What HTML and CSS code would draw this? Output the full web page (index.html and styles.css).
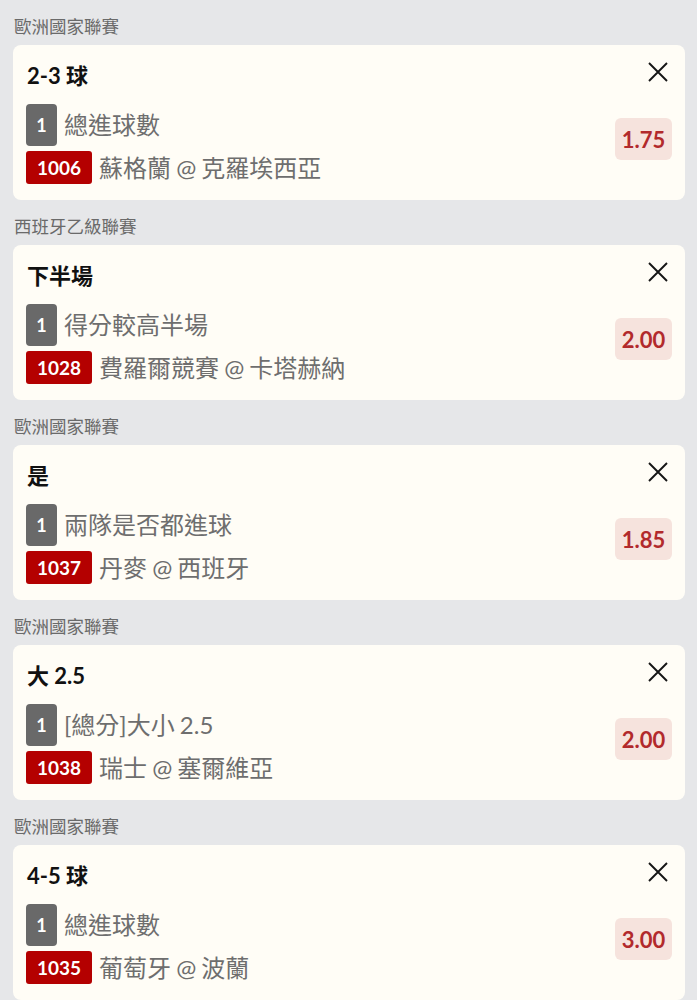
FILE: index.html
```html
<!DOCTYPE html>
<html lang="zh-Hant">
<head>
<meta charset="utf-8">
<link rel="stylesheet" href="styles.css">
</head>
<body>
<div class="list">
  <section class="group">
    <div class="league">歐洲國家聯賽</div>
    <div class="card">
      <div class="head">
        <div class="title">2-3 球</div>
        <svg class="close" viewBox="0 0 20 20"><path d="M1 1L19 19M19 1L1 19"/></svg>
      </div>
      <div class="body">
        <div class="lines">
          <div class="row"><span class="leg">1</span><span class="txt">總進球數</span></div>
          <div class="row"><span class="num">1006</span><span class="txt">蘇格蘭 @ 克羅埃西亞</span></div>
        </div>
        <div class="odds">1.75</div>
      </div>
    </div>
  </section>
  <section class="group">
    <div class="league">西班牙乙級聯賽</div>
    <div class="card">
      <div class="head">
        <div class="title">下半場</div>
        <svg class="close" viewBox="0 0 20 20"><path d="M1 1L19 19M19 1L1 19"/></svg>
      </div>
      <div class="body">
        <div class="lines">
          <div class="row"><span class="leg">1</span><span class="txt">得分較高半場</span></div>
          <div class="row"><span class="num">1028</span><span class="txt">費羅爾競賽 @ 卡塔赫納</span></div>
        </div>
        <div class="odds">2.00</div>
      </div>
    </div>
  </section>
  <section class="group">
    <div class="league">歐洲國家聯賽</div>
    <div class="card">
      <div class="head">
        <div class="title">是</div>
        <svg class="close" viewBox="0 0 20 20"><path d="M1 1L19 19M19 1L1 19"/></svg>
      </div>
      <div class="body">
        <div class="lines">
          <div class="row"><span class="leg">1</span><span class="txt">兩隊是否都進球</span></div>
          <div class="row"><span class="num">1037</span><span class="txt">丹麥 @ 西班牙</span></div>
        </div>
        <div class="odds">1.85</div>
      </div>
    </div>
  </section>
  <section class="group">
    <div class="league">歐洲國家聯賽</div>
    <div class="card">
      <div class="head">
        <div class="title">大 2.5</div>
        <svg class="close" viewBox="0 0 20 20"><path d="M1 1L19 19M19 1L1 19"/></svg>
      </div>
      <div class="body">
        <div class="lines">
          <div class="row"><span class="leg">1</span><span class="txt">[總分]大小 2.5</span></div>
          <div class="row"><span class="num">1038</span><span class="txt">瑞士 @ 塞爾維亞</span></div>
        </div>
        <div class="odds">2.00</div>
      </div>
    </div>
  </section>
  <section class="group">
    <div class="league">歐洲國家聯賽</div>
    <div class="card">
      <div class="head">
        <div class="title">4-5 球</div>
        <svg class="close" viewBox="0 0 20 20"><path d="M1 1L19 19M19 1L1 19"/></svg>
      </div>
      <div class="body">
        <div class="lines">
          <div class="row"><span class="leg">1</span><span class="txt">總進球數</span></div>
          <div class="row"><span class="num">1035</span><span class="txt">葡萄牙 @ 波蘭</span></div>
        </div>
        <div class="odds">3.00</div>
      </div>
    </div>
  </section>
</div>
</body>
</html>
```
FILE: styles.css
```css
html, body {
  margin: 0;
  padding: 0;
  background: #e6e7e9;
}
body {
  font-family: Lato, "Noto Sans CJK TC", sans-serif;
  color: #111;
}
.list {
  padding: 0 12px 0 13px;
}
.league {
  padding: 14px 0 5px 1px;
  line-height: 26px;
  font-size: 17.5px;
  color: #6a6a6a;
}
.card {
  background: #fffdf6;
  border-radius: 8px;
  height: 155px;
  box-sizing: border-box;
  padding: 18px 13px 16px 13px;
  display: flex;
  flex-direction: column;
}
.head {
  display: flex;
  align-items: flex-start;
  justify-content: space-between;
  height: 26px;
}
.title {
  font-size: 22px;
  line-height: 26px;
  font-weight: 700;
  color: #111;
  padding-left: 1px;
}
.close {
  width: 20px;
  height: 20px;
  margin-top: -1px;
  margin-right: 4px;
  fill: none;
  stroke: #151515;
  stroke-width: 1.9;
}
.body {
  margin-top: 15px;
  display: flex;
  justify-content: space-between;
  align-items: flex-start;
}
.lines {
  display: flex;
  flex-direction: column;
  gap: 5px;
}
.row {
  display: flex;
  align-items: center;
  gap: 7px;
}
.leg {
  width: 31px;
  height: 42px;
  border-radius: 4px;
  background: #696969;
  color: #fff;
  font-weight: 700;
  font-size: 18px;
  display: flex;
  align-items: center;
  justify-content: center;
}
.num {
  width: 66px;
  height: 33px;
  border-radius: 3px;
  background: #b40000;
  color: #fff;
  font-weight: 700;
  font-size: 19px;
  display: flex;
  align-items: center;
  justify-content: center;
}
.txt {
  font-size: 24px;
  color: #6e6e6e;
  line-height: 30px;
  word-spacing: -1px;
}
.odds {
  margin-top: 14px;
  width: 57px;
  height: 42px;
  border-radius: 6px;
  background: #f6e3dd;
  color: #b22a2c;
  font-weight: 700;
  font-size: 22px;
  display: flex;
  align-items: center;
  justify-content: center;
}
```
